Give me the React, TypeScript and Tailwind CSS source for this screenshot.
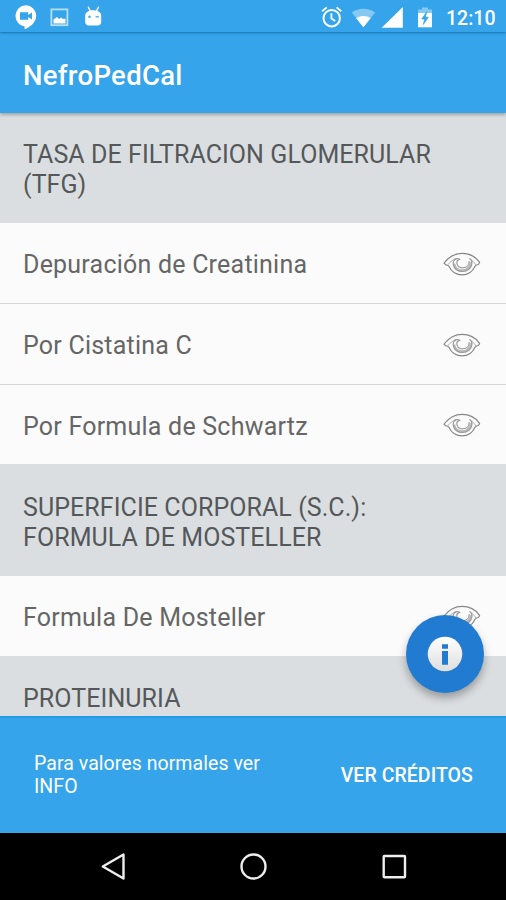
function StatusBar() {
  return (
    <div className="relative z-10 flex h-8 shrink-0 items-center bg-[#35a4ea] shadow-[0_1px_2px_rgba(0,60,110,0.5)]">
      <svg className="ml-3.5 h-8 w-24" viewBox="14 0 96 32" fill="none">
        <path d="M25.8 5.3a10.6 10.6 0 0 0-1.2 21.1V29.3c5-1.8 11.6-6.5 11.6-13.5A10.4 10.4 0 0 0 25.8 5.3Z" fill="#fff" />
        <path d="M20 12.3h8.2v2.6l3.8-2.5v7.2l-3.8-2.5v2.6H20Z" fill="#35a4ea" />
        <rect x="51.4" y="9.4" width="16" height="15.8" stroke="#b9dff8" strokeWidth="1.8" />
        <path d="M53.5 23.5v-3.9l3.4-2.7 2.4 2 1.8-1.4 1.4 1.2h3v4.8Z" fill="#fff" />
        <path d="M88.4 7.2l2 4M98.4 7.2l-2 4" stroke="#fff" strokeWidth="1.4" strokeLinecap="round" />
        <path d="M85.2 15.5c0-3.2 3.5-5.3 8-5.3s8 2.1 8 5.3v6.6c0 2.2-1.4 3.4-3.5 3.4h-9c-2.1 0-3.5-1.2-3.5-3.4Z" fill="#fff" />
        <circle cx="89.5" cy="16.8" r="1.2" fill="#35a4ea" />
        <path d="M95.6 16.8h3.2" stroke="#35a4ea" strokeWidth="1.2" />
      </svg>
      <svg className="ml-auto h-8 w-[118px]" viewBox="320 0 118 32" fill="none">
        <circle cx="331.7" cy="18.2" r="8.2" stroke="#fff" strokeWidth="2" />
        <path d="M331.4 13.3v5.3l3.8 2.4M322.1 11.3l4.7-3.9M341.3 11.3l-4.7-3.9" stroke="#fff" strokeWidth="1.8" />
        <path d="M351.8 12.6c6.8-5 16.5-5 23.3 0L363.4 27.3Z" fill="#85c8f2" />
        <path d="M356.2 18.2c4-3.1 10.2-3.1 14.4 0L363.4 27.3Z" fill="#fff" />
        <path d="M402.8 7v20.8H381.7Z" fill="#fff" />
        <path d="M418 13V9.5h4V7.6h6v1.9h4V13Z" fill="#85c8f2" />
        <path d="M418 13h14v14.3h-14Z" fill="#fff" />
        <path d="M426.8 11.8l-5 7.2h3l-1.5 5.5 5-7.3h-3Z" fill="#35a4ea" stroke="#35a4ea" strokeWidth=".7" />
      </svg>
      <span className="ml-2 mr-[10px] mt-[5px] w-[50px] whitespace-nowrap text-[19.5px] leading-6 font-medium text-white">12:10</span>
    </div>
  );
}

function Eye() {
  return (
    <svg className="mt-px h-[26px] w-10 shrink-0" viewBox="0 0 40 26" fill="none" stroke="#858788" strokeWidth="1.15" strokeLinejoin="round">
      <path d="M2 12C7 5.8 12.6 2.4 20 2.4c7.8 0 13.8 3.6 17.6 9l-1 1.9c-1.5.5-2.6 1-3.6 1.9C30.6 20.5 26.4 23.9 20.2 23.9c-6.1 0-10.8-3.5-13.3-8.7-.9-.9-1.8-1.2-3.1-1.3Z" />
      <path d="M5.8 13.6C8.8 10.6 11.2 8.4 14.2 7.4M27 7.4c2.8 1.4 5.3 3.8 6.9 6.7" stroke="#aaa" strokeWidth=".9" />
      <path d="M12.2 12.5c.4 4.2 3.7 6.9 8.2 6.9 4.7 0 8.3-3.2 8.4-8.3" stroke="#bbb" strokeWidth="2.4" />
      <path d="M17.6 8.1c-2.2-1.2-5.1-.1-6.1 2.3-.5 1.1-.5 2.4-.1 3.6 1 4 4.6 6.5 9 6.5 5.1 0 9.1-3.5 9.5-8 .2-2-.5-3.7-1.9-4.8" stroke="#999" />
      <path d="M18.3 8.4c-2 .2-3.6 1.6-3.5 3.6.1 3.4 3 5.2 6.3 4.8 3.9-.4 6.2-3.3 6-6.7" stroke="#999" />
    </svg>
  );
}

function Section({ lines, spacing, size }: { lines: string[]; spacing: string; size: string }) {
  return (
    <h2 className={`shrink-0 overflow-hidden bg-[#dadee0] pl-[23px] text-[25px] leading-[30px] font-normal tracking-[0.07px] text-[#55585a] ${size} ${spacing}`}>
      {lines.map((line) => <span key={line} className="block whitespace-nowrap">{line}</span>)}
    </h2>
  );
}

function Row({ label, size, divider = false }: { label: string; size: string; divider?: boolean }) {
  return (
    <div className={`flex shrink-0 items-center justify-between bg-[#fbfbfb] pr-6 pl-[23px] ${size} ${divider ? "border-b border-[#d5d5d5]" : ""}`}>
      <span className="mt-1 text-[25px] leading-[30px] tracking-[0.22px] text-[#666]">{label}</span>
      <Eye />
    </div>
  );
}

export default function App() {
  return (
    <div className="relative flex h-[900px] w-[506px] flex-col overflow-hidden bg-[#dadee0] font-['Roboto',sans-serif]">
      <StatusBar />
      <header className="relative flex h-[81px] shrink-0 items-center bg-[#35a4ea] pt-1.5 pl-[23px] shadow-[0_2px_3px_rgba(0,0,0,0.25)]">
        <h1 className="text-[27.5px] leading-8 font-medium tracking-[0.3px] text-white">NefroPedCal</h1>
      </header>
      <main className="flex h-[603px] shrink-0 flex-col overflow-hidden">
        <Section lines={["TASA DE FILTRACION GLOMERULAR", "(TFG)"]} size="h-[110px]" spacing="pt-[27px]" />
        <Row label="Depuración de Creatinina" size="h-[81px]" divider />
        <Row label="Por Cistatina C" size="h-[81px]" divider />
        <Row label="Por Formula de Schwartz" size="h-[79px]" />
        <Section lines={["SUPERFICIE CORPORAL (S.C.):", "FORMULA DE MOSTELLER"]} size="h-28" spacing="pt-[29px]" />
        <Row label="Formula De Mosteller" size="h-20" />
        <Section lines={["PROTEINURIA"]} size="h-[60px]" spacing="pt-[28px]" />
      </main>
      <footer className="flex h-[117px] shrink-0 items-center justify-between border-t-2 border-[#229be9] bg-[#35a4ea] pr-[33px] pl-[34px] text-white">
        <p className="mb-px text-[19.5px] leading-[23px] tracking-[0.06px]">Para valores normales ver<br />INFO</p>
        <button className="text-[19.5px] leading-6 font-medium tracking-[0.06px]">VER CRÉDITOS</button>
      </footer>
      <nav className="flex h-[67px] shrink-0 bg-black">
        <svg className="h-[67px] w-[506px]" viewBox="0 0 506 67" fill="none" stroke="#eee" strokeWidth="2.4" strokeLinejoin="round">
          <path d="M102.8 33.5 123.5 21.5V45.5Z" />
          <circle cx="253.5" cy="33.5" r="12" />
          <rect x="383.7" y="23" width="21.3" height="21.3" rx=".7" />
        </svg>
      </nav>
      <button className="absolute top-[615px] left-[406px] flex h-[78px] w-[78px] items-center justify-center rounded-full bg-[#217bd1] shadow-[0_5px_9px_rgba(0,0,0,0.3)]" aria-label="INFO">
        <svg className="h-9 w-9" viewBox="0 0 36 36">
          <defs><linearGradient id="info-fill" x2="0" y2="1"><stop stopColor="#fff" /><stop offset="1" stopColor="#dedede" /></linearGradient></defs>
          <circle cx="18" cy="18" r="17.3" fill="url(#info-fill)" />
          <path d="M15 8.3h6v4.5h-6ZM15 15h6v13.8h-6Z" fill="#217bd1" />
        </svg>
      </button>
    </div>
  );
}
